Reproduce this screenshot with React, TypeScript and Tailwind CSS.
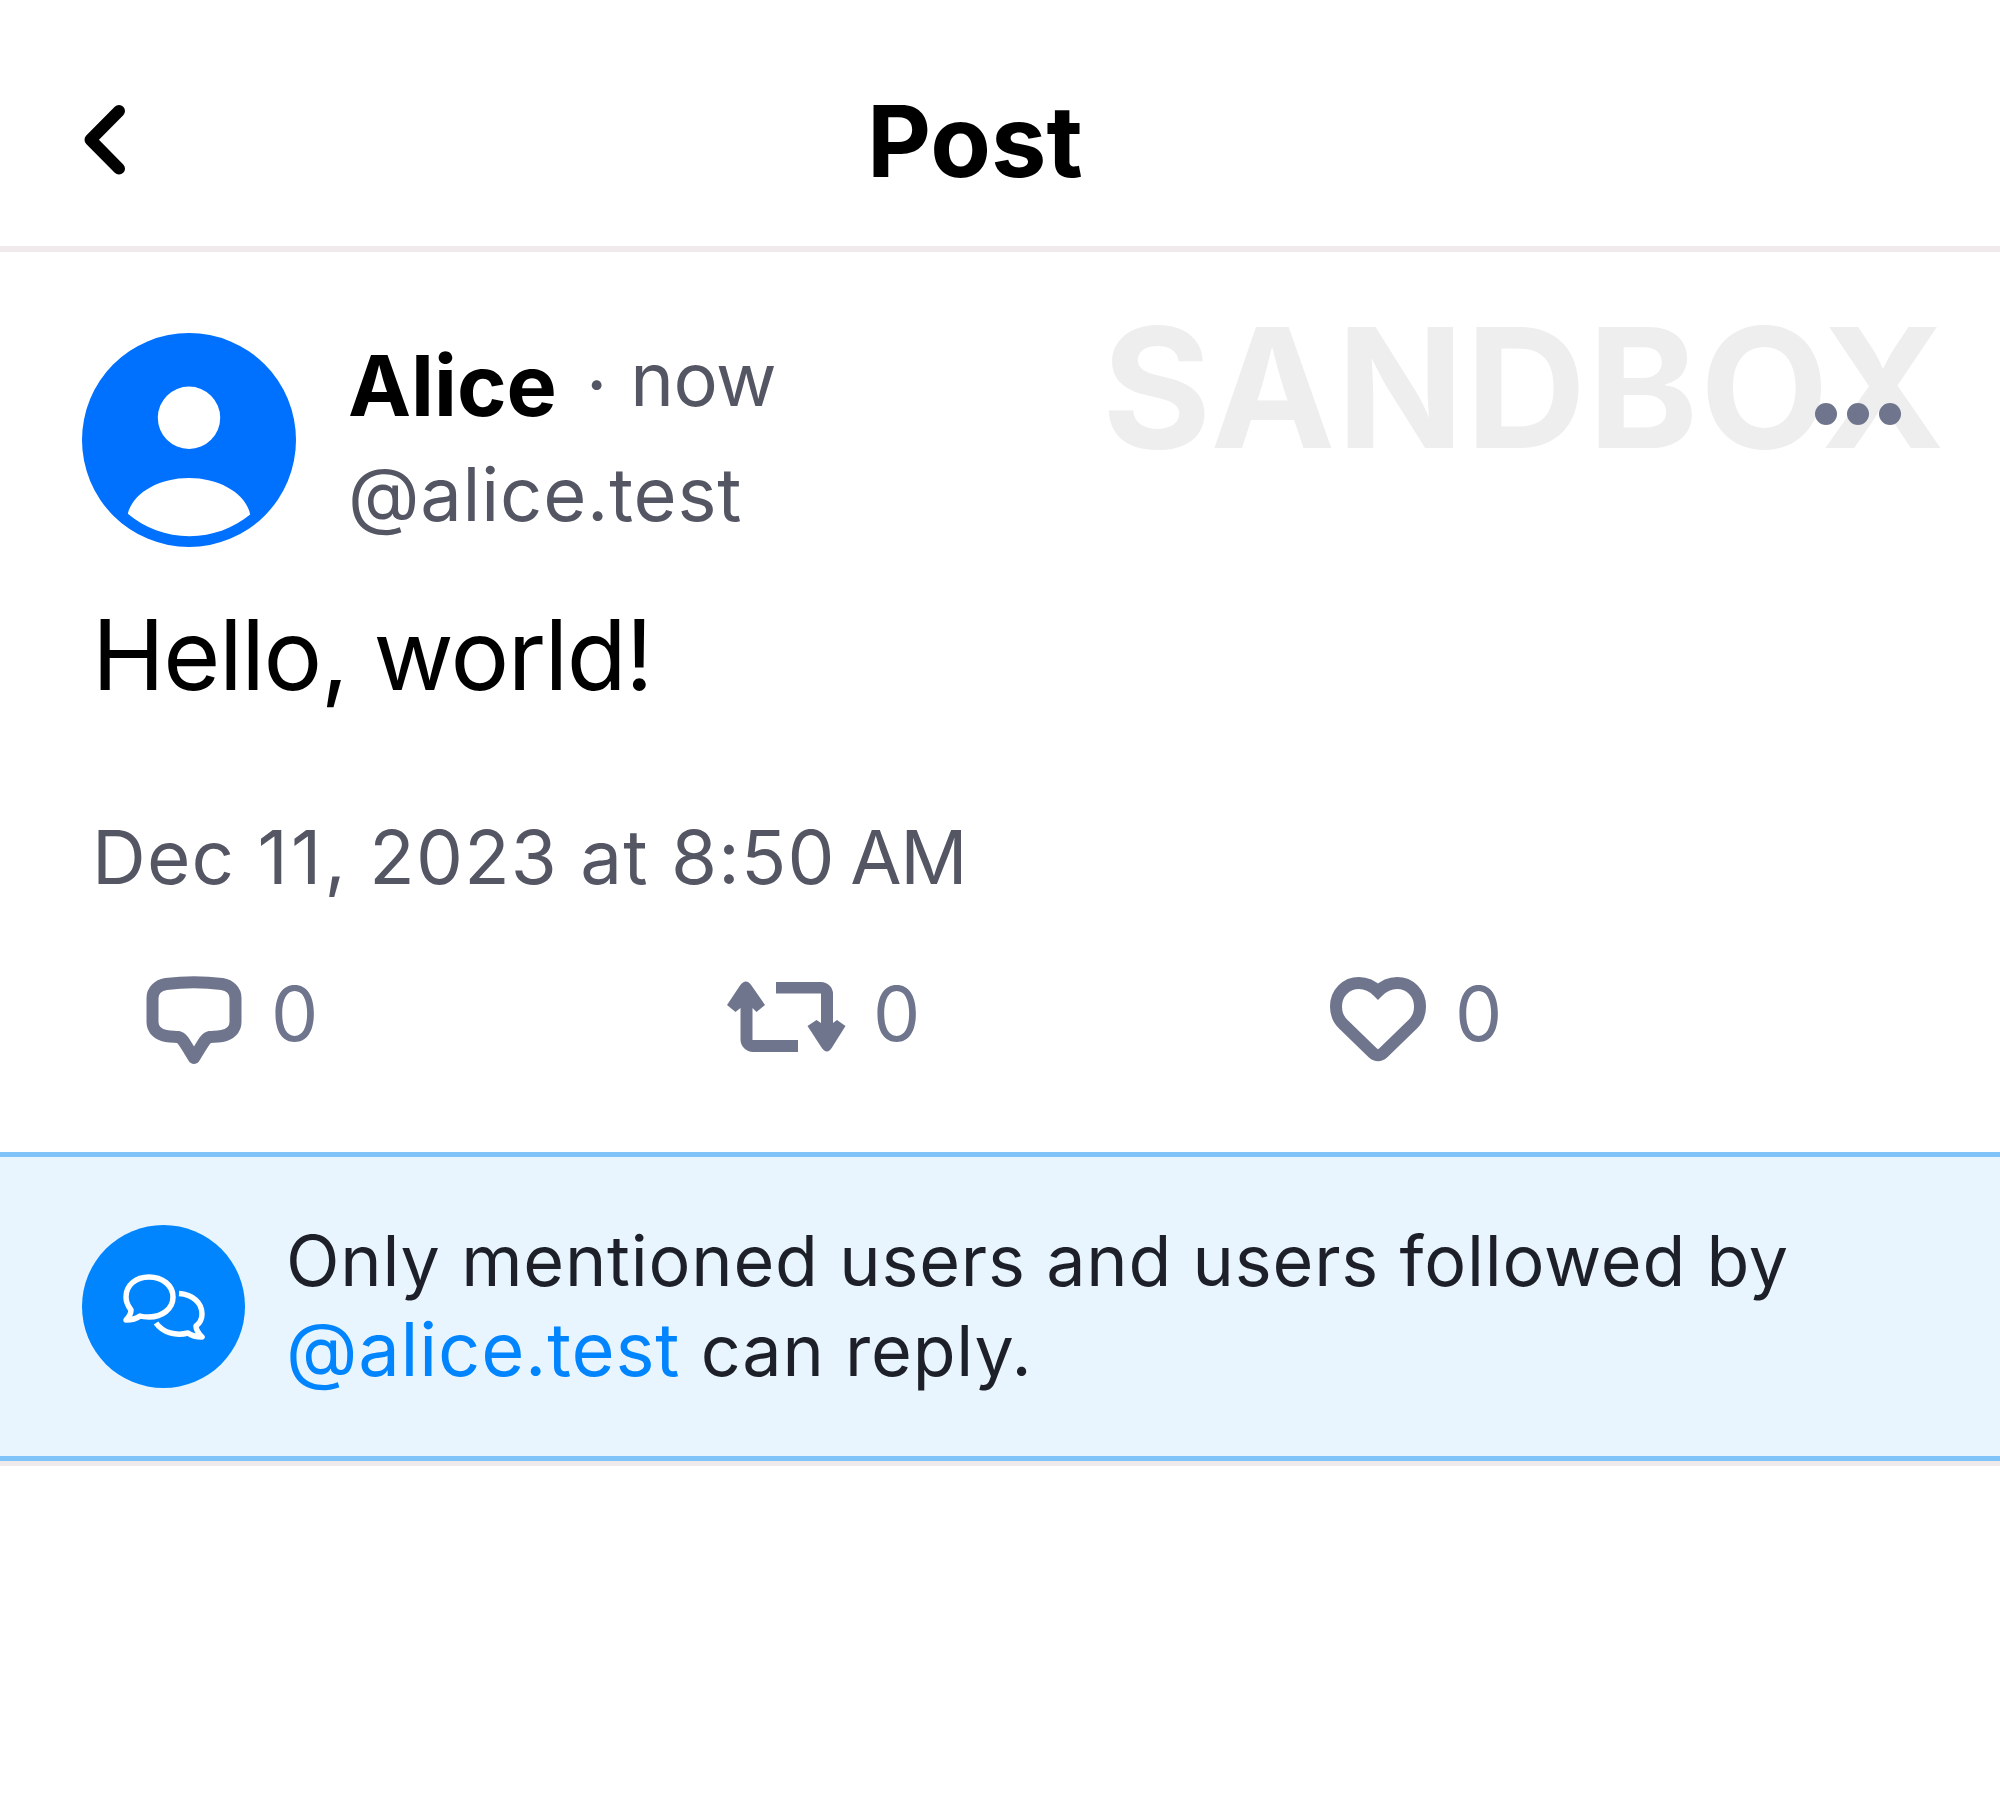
const GREY = '#70758e';

function BackIcon() {
  return (
    <svg width="48" height="76" viewBox="0 0 48 76" fill="none">
      <path d="M36 9L7.500 37.800L36 66.600" stroke="#000" strokeWidth="12" strokeLinecap="round" strokeLinejoin="round" />
    </svg>
  );
}

function Avatar() {
  return (
    <svg className="size-[214px] shrink-0" viewBox="0 0 24 24">
      <circle cx="12" cy="12" r="12" fill="#0070ff" />
      <circle cx="12" cy="9.5" r="3.5" fill="#fff" />
      <path
        d="M12.058 22.784C9.422 22.784 7.007 21.836 5.137 20.262C5.667 17.988 8.534 16.25 11.99 16.25C15.494 16.25 18.391 18.036 18.864 20.357C17.01 21.874 14.64 22.784 12.058 22.784Z"
        fill="#fff"
      />
    </svg>
  );
}

function ReplyIcon() {
  return (
    <svg className="mt-[11px]" width="96" height="90" viewBox="0 0 96 90" fill="none" stroke={GREY} strokeWidth="12" strokeLinejoin="round">
      <path d="M20 9C38 6.600 58 6.600 76 9C84 10.500 89.500 15.500 89.500 23V47C89.500 54.500 84 59.500 76 61C70 62 67 61.500 64 62C59 63 57.500 68 48 83C38.500 68 37 63 32 62C29 61.500 26 62 20 61C12 59.500 6.500 54.500 6.500 47V23C6.500 15.500 12 10.500 20 9Z" />
    </svg>
  );
}

function RepostIcon() {
  return (
    <svg className="mt-[6px]" width="120" height="72" viewBox="0 0 120 72" fill={GREY}>
      <path d="M49 1H94A12 12 0 0 1 106 13V42L110 39L118.500 45L105 66.500Q100 74.500 94.500 66.500L80.500 45L89.500 39L94 42V12.500H49Z" />
      <path d="M71 71H26A12.500 12.500 0 0 1 13.500 58.500V27L8.500 31L0 24L13 4.500Q19 -3.500 24.500 4.500L38 24L29.500 31L25.500 27V59H71Z" />
    </svg>
  );
}

function LikeIcon() {
  return (
    <svg className="mt-[11px]" width="98" height="88" viewBox="0 0 98 88" fill="none">
      <path
        d="M49 15.500C42 8.500 36 7 30 7C17 7 7 17 7 30.500C7 38.500 10 44.500 15 49L44 77Q49 81.500 54 77L83 49C88 44.500 91 38.500 91 30.500C91 17 81 7 68 7C62 7 56 8.500 49 15.500Z"
        stroke={GREY}
        strokeWidth="12"
      />
    </svg>
  );
}

function CommentsIcon() {
  return (
    <svg width="82" height="66" viewBox="0 0 82 66" fill="none" stroke="#fff" strokeWidth="5.500" strokeLinecap="butt" strokeLinejoin="round">
      <path d="M26 3C39 3 50 11 50 23C50 35 39 43 26 43C23 43 20 43 17 42C13 45 8 46 3 46C6 43 8 40 8 36C5 32 3 28 3 23C3 11 13 3 26 3Z" />
      <path d="M56 19.500C70 20.500 79 29 79 40C79 45 77 49 73 52C73 56 76 60 79 63C74 63 69 62 65 59C53 62 40 59 33 49" />
    </svg>
  );
}

export default function App() {
  return (
    <div className="min-h-[1820px] w-full overflow-hidden bg-white font-['Inter',sans-serif] text-black">
      <header className="flex h-[252px] items-center border-b-[6px] border-[#f0eaec] pt-[33px] pl-[83px]">
        <button className="w-[784px]">
          <BackIcon />
        </button>
        <h1 className="pt-[4px] text-[99px] leading-none font-bold whitespace-nowrap">Post</h1>
      </header>

      <main>
        <article className="relative h-[900px]">
          {/* Environment watermark, sits under the menu dots */}
          <div className="absolute top-[35px] left-[1102px] text-[167px] leading-[200px] font-bold tracking-[1.6px] text-[#eeeeee]">SANDBOX</div>

          <div className="relative flex items-start pt-[81px] pl-[82px]">
            <Avatar />
            <div className="ml-[52px] flex flex-col">
              <div className="flex h-[104px] items-start whitespace-nowrap">
                <span className="text-[84.5px] leading-[105px] font-bold">Alice</span>
                <span className="ml-[29px] text-[74px] leading-[102px] text-[#545664]">·</span>
                <span className="ml-[23px] text-[74px] leading-[92px] tracking-[-0.5px] text-[#545664]">now</span>
              </div>
              <span className="text-[74px] leading-[114px] tracking-[0.8px] text-[#545664]">@alice.test</span>
            </div>
            <svg className="mt-[69px] mr-[98px] ml-auto" width="88" height="24" viewBox="0 0 88 24" fill={GREY}>
              <circle cx="12" cy="12" r="11" />
              <circle cx="44" cy="12" r="11" />
              <circle cx="76" cy="12" r="11" />
            </svg>
          </div>

          <p className="mt-[36px] pl-[92px] text-[98px] leading-[136px] tracking-[-1.5px]">Hello, world!</p>
          <p className="mt-[84px] pl-[92px] text-[74.5px] leading-[100px] tracking-[1.2px] text-[#545664]">
            Dec <span className="tracking-[3.2px]">11</span>, 2023 at 8:50&#8239;<span className="tracking-[-1.6px]">AM</span>
          </p>

          <div className="mt-[57px] flex h-[100px] items-center pl-[146px] text-[75px] text-[#70758e]">
            <div className="flex w-[581px] items-center gap-[29px]">
              <ReplyIcon />
              <span>0</span>
            </div>
            <div className="flex w-[602px] items-center gap-[26px]">
              <RepostIcon />
              <span>0</span>
            </div>
            <div className="flex items-center gap-[28px]">
              <LikeIcon />
              <span>0</span>
            </div>
          </div>
        </article>

        <div className="flex h-[309px] items-center border-y-[5px] border-[#80c3f8] bg-[#e8f5ff] pl-[82px]">
          <div className="flex size-[163px] shrink-0 items-center justify-center rounded-full bg-[#0085ff]">
            <CommentsIcon />
          </div>
          <p className="mb-[2px] ml-[41px] text-[70px] leading-[90px] tracking-[0.8px] whitespace-nowrap text-[#1d2028]">
            <span>Only mentioned users and users followed by</span>
            <br />
            <span className="text-[74px] leading-none text-[#0085ff]">@alice.test</span> <span>can reply.</span>
          </p>
        </div>
        <div className="h-[5px] bg-[#efebed]" />
      </main>
    </div>
  );
}
